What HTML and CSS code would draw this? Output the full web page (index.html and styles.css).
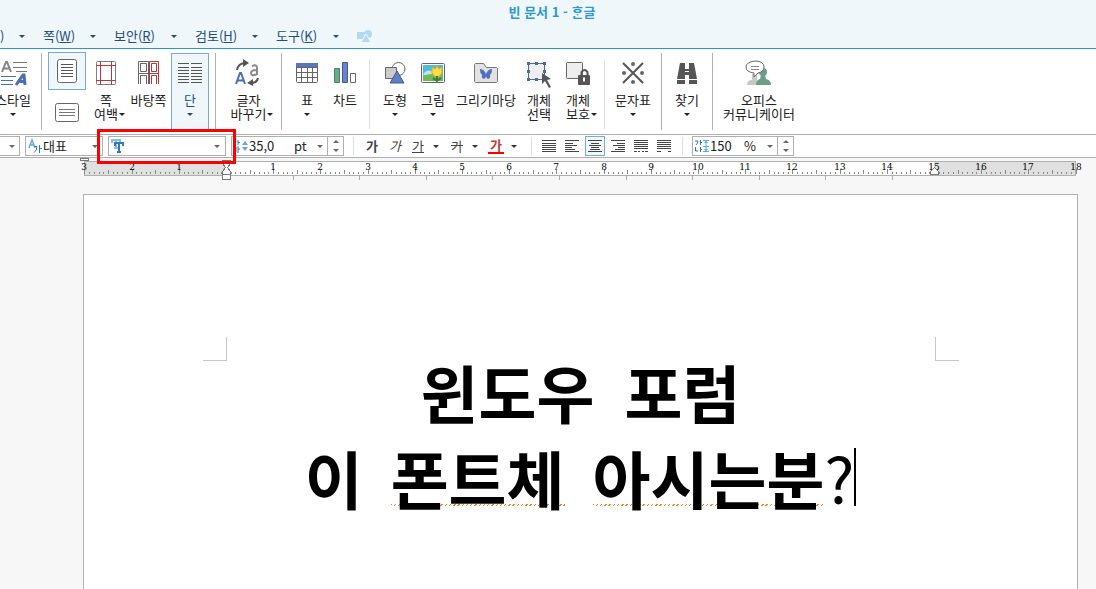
FILE: index.html
```html
<!DOCTYPE html>
<html lang="ko">
<head>
<meta charset="utf-8">
<title>빈 문서 1 - ᄒᆞᆫ글</title>
<link rel="stylesheet" href="styles.css">
</head>
<body>
<header class="top">
  <h1 class="title">빈 문서 1 - ᄒᆞᆫ글</h1>
  <nav class="menu">
    <button class="menu-item first"><span>)</span><i class="caret"></i></button>
    <button class="menu-item short"><span>쪽(<u>W</u>)</span><i class="caret"></i></button>
    <button class="menu-item"><span>보안(<u>R</u>)</span><i class="caret"></i></button>
    <button class="menu-item"><span>검토(<u>H</u>)</span><i class="caret"></i></button>
    <button class="menu-item"><span>도구(<u>K</u>)</span><i class="caret"></i></button>
    <button class="menu-icon" aria-label="도형 메뉴"><svg width="16" height="15" viewBox="0 0 16 15" fill="#b3d9ee"><path d="M0 3h7v7H0z"/><circle cx="11" cy="5" r="4"/><path d="M9 5l5 8.500H4z" stroke="#eff7fb"/></svg></button>
  </nav>
</header>

<section class="ribbon">
  <button class="tool w26"><svg width="28" height="28" viewBox="0 0 28 28"><g stroke="#777"><path d="M14 3.500h14M14 8.500h14M17 12.500h11"/></g><path d="M3 13l4-10h1l4 10M4 9.500h7" fill="none" stroke="#858585" stroke-width="2"/><path d="M2 17.500h15M2 21.500h12M2 25.500h12" stroke="#4a6db5"/><path d="M17 26l7-10h1l1 10M20 22.500h6" fill="none" stroke="#4a6db5" stroke-width="3"/></svg><span>스타일</span><i class="caret"></i></button>
  <hr class="sep after-style">
  <div class="views">
    <button class="view on" aria-label="쪽 보기"><svg width="24" height="26" viewBox="0 0 24 26"><rect x="2.500" y="1.500" width="19" height="23" rx="2" fill="#fff" stroke="#666"/><path d="M6 6.500h12M6 9.500h12M6 12.500h12M6 15.500h12M6 18.500h12" stroke="#555"/></svg></button>
    <button class="view" aria-label="폭 맞춤 보기"><svg width="24" height="20" viewBox="0 0 24 20"><rect x=".5" y=".5" width="23" height="18" rx="2" fill="#fff" stroke="#666"/><path d="M4 6.500h16M4 9.500h16M4 12.500h16" stroke="#777"/></svg></button>
  </div>
  <button class="tool w40"><svg width="28" height="28" viewBox="0 0 28 28" fill="none"><rect x="4.500" y="2.500" width="19" height="23" rx="1" stroke="#808080"/><path d="M8.500 2v24M19.500 2v24M4 6.500h20M4 21.500h20" stroke="#b8363c"/></svg><span>쪽</span><span>여백<i class="caret inline"></i></span></button>
  <button class="tool w45"><svg width="28" height="28" viewBox="0 0 28 28" fill="none"><path d="M3.500 25V2.500h10V25M3.500 14.500h10M5.500 4.500h6v8h-6zM5.500 25v-8.500h6V25" stroke="#666"/><path d="M14.500 25V2.500h9V25M14.500 14.500h9M16.500 4.500h5v8h-5zM16.500 25v-8.500h5V25" stroke="#b8363c"/></svg><span>바탕쪽</span></button>
  <button class="tool w38 on"><svg width="28" height="28" viewBox="0 0 28 28"><path d="M2 4.500h11M2 8.500h11M2 11.500h11M2 14.500h11M2 17.500h11M2 20.500h11M2 23.500h11M15 4.500h11M15 8.500h11M15 11.500h11M15 14.500h11M15 17.500h11M15 20.500h11M15 23.500h11" stroke="#555"/></svg><span>단</span><i class="caret"></i></button>
  <hr class="sep after-column">
  <button class="tool w65"><svg width="28" height="28" viewBox="0 0 28 28" fill="none"><path d="M1 25l4-11h1l4 11M2.500 21.500h6.500" stroke="#4a6db5" stroke-width="2"/><path d="M17 7q5-2 5 2v7M22 11q-6 0-6 3 0 4 6 1" stroke="#8a8a8a" stroke-width="2"/><path d="M2 11q1-6 7-7" stroke="#555" stroke-width="2"/><path d="M8 0l6 4-6 4z" fill="#555"/><path d="M23 19q-1 5-7 5" stroke="#555" stroke-width="2"/><path d="M18 20l-6 4 6 3z" fill="#555"/></svg><span>글자</span><span>바꾸기<i class="caret inline"></i></span></button>
  <hr class="sep">
  <button class="tool w50"><svg width="28" height="28" viewBox="0 0 28 28" fill="none"><rect x="3.500" y="4.500" width="21" height="19" rx="1" fill="#fff" stroke="#666"/><path d="M3 4h22v4H3z" fill="#5876bd"/><path d="M3 8.500h22M3 13.500h22M3 18.500h22M8.500 8v15M14.500 8v15M19.500 8v15" stroke="#666"/></svg><span>표</span><i class="caret"></i></button>
  <button class="tool w26"><svg width="28" height="28" viewBox="0 0 28 28"><path d="M3.500 9.500h5v14h-5z" fill="#6aad8b" stroke="#4b8469"/><path d="M11.500 3.500h5v20h-5z" fill="#6684c8" stroke="#405a98"/><path d="M19.500 14.500h5v9h-5z" fill="#fff" stroke="#666"/></svg><span>차트</span></button>
  <hr class="sep light after-chart">
  <button class="tool w50"><svg width="28" height="28" viewBox="0 0 28 28"><circle cx="17.500" cy="10" r="6.500" fill="#fff" stroke="#666"/><path d="M4.500 8.500h11v11h-11z" fill="#ccc" stroke="#666"/><path d="M16 12l7 12H9z" fill="#6280c4" stroke="#405a98"/></svg><span>도형</span><i class="caret"></i></button>
  <button class="tool w26"><svg width="28" height="28" viewBox="0 0 28 28"><rect x="2.500" y="4.500" width="23" height="19" rx="1" fill="#fff" stroke="#666"/><path d="M4 6h20v16H4z" fill="#4ebbdc"/><path d="M4 16q3-6 8-4 6-4 8 1v3z" fill="#bee7f3"/><path d="M4 17q9-4 20 0v5H4z" fill="#72b958"/><path d="M13 8l3 2 2-3 2 3 3-2v6q-2 4-5 4t-5-4z" fill="#ffdc3f" stroke="#d5aa20"/><path d="M18 17v5M14 19l4 3 4-3" fill="none" stroke="#347f3d" stroke-width="2"/></svg><span>그림</span><i class="caret"></i></button>
  <button class="tool w80"><svg width="28" height="28" viewBox="0 0 28 28"><path d="M2.500 22.500v-17l1-1h8l3 4h10l1 1v13l-1 1h-21z" fill="#e2e2e2" stroke="#777"/><path d="M8 10q4 0 6 5 2-5 6-5 0 5-2 5.500 1 5-3 4l-1-2-1 2q-4 1-3-4-2-.5-2-5.500z" fill="#4f70bd"/></svg><span>그리기마당</span></button>
  <button class="tool w26"><svg width="28" height="28" viewBox="0 0 28 28"><path d="M3.500 4.500h16v16h-16z" fill="#eee" stroke="#666"/><g fill="#466ab8"><path d="M2 3h3v3H2zM10 3h3v3h-3zM18 3h3v3h-3zM2 11h3v3H2zM18 11h3v3h-3zM2 19h3v3H2zM10 19h3v3h-3z"/></g><path d="M17 14l9 6-4 1 4 7-2 1-4-7-3 3z" fill="#555"/></svg><span>개체</span><span>선택</span></button>
  <button class="tool w52"><svg width="28" height="28" viewBox="0 0 28 28"><rect x="2.500" y="3.500" width="16" height="16" rx="1" fill="#eee" stroke="#666"/><path d="M17.500 17v-4q3-4 6 0v4" fill="none" stroke="#555" stroke-width="2"/><rect x="14" y="16" width="12" height="10" rx="1" fill="#555"/><path d="M20 18.500v4" stroke="#fff" stroke-width="2"/></svg><span>개체</span><span>보호<i class="caret inline"></i></span></button>
  <hr class="sep light">
  <button class="tool w56"><svg width="28" height="28" viewBox="0 0 28 28"><path d="M4 4l20 20M24 4L4 24" stroke="#555" stroke-width="2"/><g fill="#666"><circle cx="14" cy="5" r="2"/><circle cx="14" cy="23" r="2"/><circle cx="5" cy="14" r="2"/><circle cx="23" cy="14" r="2"/></g></svg><span>문자표</span><i class="caret"></i></button>
  <hr class="sep">
  <button class="tool w50"><svg width="28" height="28" viewBox="0 0 28 28" fill="#555"><path d="M7 4h5v6h4V4h5l3 16h-8v-4h-4v4H4z"/><path d="M4 21h8v4H4zM16 21h8v4h-8z"/><path d="M12 12.500h4" stroke="#fff"/></svg><span>찾기</span><i class="caret"></i></button>
  <hr class="sep">
  <button class="tool w92"><svg width="28" height="28" viewBox="0 0 28 28"><path d="M2 26q0-5 5-5v-6h5v11z" fill="#c8c8c8"/><circle cx="18" cy="13" r="4" fill="#6d9d86"/><path d="M11 26q0-5 4-6l1-4h4l1 4q5 1 5 6z" fill="#6d9d86"/><path d="M10 2q9 0 9 6 0 5-6 6l-4 4v-4q-8-1-8-6t9-6z" fill="#fff" stroke="#666"/><path d="M6 7.500h8M6 10.500h8" stroke="#888"/></svg><span>오피스</span><span>커뮤니케이터</span></button>
</section>

<section class="format">
  <div class="box cut"><button class="drop" aria-label="스타일 목록"><i class="caret gray"></i></button></div>
  <label class="box lang"><svg width="14" height="14" viewBox="0 0 14 14" fill="none"><path d="M1 9l3-8 3 8M2 6h4" stroke="#66a9dc" stroke-width="1.500"/><path d="M6 7.500h3q0 4-3 6M11.500 6v8M12 9.500h2" stroke="#2c7abb"/></svg><select aria-label="언어"><option>대표</option></select><i class="caret gray"></i></label>
  <div class="font-wrap">
    <label class="box font"><svg width="14" height="14" viewBox="0 0 14 14" fill="none"><path d="M1 4V1h8v3M5 1v8M3 9h4" stroke="#86bce6" stroke-width="2"/><path d="M4 7V4h8v3M8 4v9M6 13h4" stroke="#2c7abb" stroke-width="2"/></svg><select aria-label="글꼴"><option></option></select><i class="caret gray"></i></label>
    <div class="highlight"></div>
  </div>
  <div class="box size"><svg width="16" height="14" viewBox="0 0 16 14" fill="none"><path d="M0 2h3q0 2-2 4M5 1v5M5 3.500h2M0 8h3v5M5 7v7M5 10h2" stroke="#2c7abb"/><path d="M12 2l3 4H9zM12 12l3-4H9z" fill="#5fa8e0"/></svg><input aria-label="글자 크기" value="35,0"><span class="unit">pt</span><button class="drop" aria-label="크기 목록"><i class="caret gray"></i></button><span class="spin"><button aria-label="크게"><i class="caret gray up"></i></button><button aria-label="작게"><i class="caret gray"></i></button></span></div>
  <hr class="fsep after-size">
  <button class="ch"><b>가</b></button>
  <button class="ch"><em>가</em></button>
  <button class="ch"><u>가</u></button><button class="arrow" aria-label="밑줄 모양"><i class="caret"></i></button>
  <button class="ch"><s>가</s></button><button class="arrow" aria-label="취소선 모양"><i class="caret"></i></button>
  <button class="ch color"><span>가</span></button><button class="arrow" aria-label="글자 색"><i class="caret"></i></button>
  <hr class="fsep before-align">
  <button class="al" aria-label="양쪽 정렬"><svg width="16" height="14" viewBox="0 0 16 14"><path d="M1 1.500h14M1 4.500h14M1 6.500h14M1 8.500h14M1 10.500h14M1 12.500h14" stroke="#444"/></svg></button>
  <button class="al" aria-label="왼쪽 정렬"><svg width="16" height="14" viewBox="0 0 16 14"><path d="M1 1.500h14M1 4.500h8M1 6.500h12M1 8.500h7M1 10.500h10M1 12.500h14" stroke="#444"/></svg></button>
  <button class="al on" aria-label="가운데 정렬"><svg width="16" height="14" viewBox="0 0 16 14"><path d="M1 1.500h14M4 4.500h8M2 6.500h12M4 8.500h8M3 10.500h10M1 12.500h14" stroke="#444"/></svg></button>
  <button class="al" aria-label="오른쪽 정렬"><svg width="16" height="14" viewBox="0 0 16 14"><path d="M1 1.500h14M7 4.500h8M3 6.500h12M8 8.500h7M5 10.500h10M1 12.500h14" stroke="#444"/></svg></button>
  <button class="al" aria-label="배분 정렬"><svg width="16" height="14" viewBox="0 0 16 14"><path d="M1 1.500h14M1 3.500h14M1 5.500h14M1 7.500h14M1 9.500h14M1 12.500h3M5 12.500h2M9 12.500h2M12 12.500h3" stroke="#444"/></svg></button>
  <button class="al" aria-label="나눔 정렬"><svg width="16" height="14" viewBox="0 0 16 14"><path d="M1 1.500h14M1 3.500h14M1 5.500h14M1 7.500h14M1 9.500h14M1 12.500h4M12 12.500h3" stroke="#444"/></svg></button>
  <hr class="fsep before-line">
  <div class="box line"><svg width="14" height="14" viewBox="0 0 14 14" fill="none"><path d="M0 2h3q0 2-2 4M5.500 1v5M5 3.500h2M.5 8v4H3M5.500 8v5M5 10.500h2" stroke="#2c7abb"/><path d="M8 1.500h6M8 7.500h6M8 12.500h6M11 2v10" stroke="#5fa8e0"/><path d="M11 2l2 2H9zM11 12l2-2H9z" fill="#5fa8e0"/></svg><input aria-label="줄 간격" value="150"><span class="unit">%</span><button class="drop" aria-label="줄 간격 목록"><i class="caret gray"></i></button><span class="spin"><button aria-label="넓게"><i class="caret gray up"></i></button><button aria-label="좁게"><i class="caret gray"></i></button></span></div>
</section>

<main class="work">
  <svg class="ruler" id="ruler" width="1016" height="26" viewBox="80 158 1016 26" shape-rendering="crispEdges"></svg>
  <article class="page">
    <div class="margins"><i class="corner left"></i><i class="corner right"></i></div>
    <p class="row"><span>윈도우</span><span>포럼</span></p>
    <p class="row"><span>이</span><span class="typo">폰트체</span><span class="end"><span class="typo">아시는분</span><span class="mark">?</span><i class="cursor"></i></span></p>
  </article>
</main>
<script src="ruler.js"></script>
</body>
</html>
```
FILE: styles.css
```css
* { box-sizing: border-box; }
body {
  margin: 0;
  min-height: 100vh;
  display: flex;
  flex-direction: column;
  overflow: hidden;
  background: #f7f7f7;
  color: #222;
  font: 13px/14px "Noto Sans CJK KR", sans-serif;
}
button, input, select {
  margin: 0;
  padding: 0;
  border: 0;
  background: none;
  color: inherit;
  font: inherit;
  appearance: none;
}
svg { display: block; flex: none; overflow: visible; }
hr { margin: 0; border: 0; flex: none; }

.caret {
  display: block;
  flex: none;
  border: solid transparent;
  border-width: 3px 3px 0;
  border-top-color: currentColor;
}
.caret.gray { color: #666; }
.caret.up { transform: rotate(180deg); }
.caret.inline { display: inline-block; margin: 0 -7px 0 1px; vertical-align: 3px; }

.top { background: #eff7fb; border-bottom: 1px solid #2b93d1; }
.title {
  margin: 0;
  padding-left: 8px;
  color: #2b97d3;
  font-size: 13px;
  line-height: 24px;
  text-align: center;
}
.menu { display: flex; align-items: center; gap: 18px; height: 24px; color: #1f4e79; }
.menu-item { display: flex; flex: none; align-items: center; justify-content: space-between; width: 63px; }
.menu-item.first { width: 25px; }
.menu-item.short { width: 53px; }

.ribbon {
  display: flex;
  align-items: flex-start;
  height: 86px;
  padding-top: 4px;
  background: #fff;
  border-bottom: 1px solid #b0b0b0;
}
.tool {
  display: flex;
  flex: none;
  flex-direction: column;
  align-items: center;
  height: 77px;
  padding-top: 5px;
  border: 1px solid transparent;
  white-space: nowrap;
}
.tool svg { margin-bottom: 6px; }
.tool > .caret { margin-top: 6px; }
.on { background: #eff7fb; border: 1px solid #7aa9d6; }
.tool.on { color: #1f4e79; }
.w26 { width: 26px; }
.w38 { width: 38px; }
.w40 { width: 40px; }
.w45 { width: 45px; }
.w50 { width: 50px; }
.w52 { width: 52px; }
.w56 { width: 56px; }
.w65 { width: 65px; }
.w80 { width: 80px; }
.w92 { width: 92px; }
.sep { width: 1px; height: 77px; background: #b0b0b0; }
.sep.light { height: 69px; margin-top: 7px; background: #ddd; }
.after-style { margin: 0 6px 0 15px; }
.after-column { margin-left: 6px; }
.after-chart { margin-left: 11px; }
.views { display: flex; flex-direction: column; gap: 4px; margin-top: -1px; }
.view { display: flex; align-items: center; justify-content: center; width: 38px; height: 38px; }

.format {
  display: flex;
  align-items: center;
  height: 23px;
  background: #fff;
  border-bottom: 1px solid #b0b0b0;
}
.box {
  display: flex;
  flex: none;
  align-items: center;
  height: 20px;
  border: 1px solid #b0b0b0;
  background: #fff;
}
.box input { min-width: 0; }
.box select { flex: 1; min-width: 0; height: 18px; }
.drop { display: flex; align-items: center; justify-content: center; width: 15px; height: 18px; }
.cut { width: 20px; justify-content: flex-end; border-left: 0; margin-right: 5px; }
.lang { width: 78px; gap: 1px; padding: 0 4px 0 2px; }
.font-wrap { position: relative; margin-left: 5px; }
.font { width: 118px; padding: 0 5px 0 2px; }
.highlight { position: absolute; inset: -7px -10px -8px -11px; border: 3px solid #f00; pointer-events: none; }
.size { width: 113px; margin-left: 5px; padding-left: 1px; }
.size input { width: 45px; }
.size .unit { width: 18px; }
.spin { display: flex; flex-direction: column; align-items: center; justify-content: space-around; width: 16px; height: 18px; margin-left: auto; border-left: 1px solid #b0b0b0; }
.spin button { display: block; padding: 2px; }
.fsep { width: 1px; height: 18px; background: #ddd; }
.after-size { margin: 0 8px 0 9px; }
.before-align { margin: 0 7px 0 6px; }
.before-line { margin: 0 9px 0 5px; }
.ch { width: 20px; margin-right: 3px; color: #444; text-align: center; }
.ch + .arrow { margin-left: -3px; }
.ch em { display: inline-block; font-style: italic; }
.ch.color { color: #c0393c; }
.ch.color span { display: inline-block; padding: 0 2px; border-bottom: 2px solid #f00; font-weight: bold; }
.arrow { display: flex; justify-content: center; width: 16px; margin-right: 3px; color: #333; }
.al { display: flex; align-items: center; justify-content: center; width: 20px; height: 20px; margin-right: 3px; }
.line { width: 102px; padding-left: 2px; }
.line input { width: 34px; margin-left: 1px; }
.line .unit { width: 18px; }

.work { display: flex; flex: 1; flex-direction: column; }
.ruler { margin-left: 80px; }
.ruler text { font: 9px "DejaVu Serif", serif; text-anchor: middle; }
.page {
  flex: 1;
  margin: 10px 18px 0 83px;
  background: #fff;
  border: 1px solid #b0b0b0;
  border-bottom: 0;
  color: #000;
}
.margins { display: flex; justify-content: space-between; padding: 142px 118px 0 119px; }
.corner { width: 24px; height: 24px; border-bottom: 1px solid #c8c8c8; }
.corner.left { border-right: 1px solid #c8c8c8; }
.corner.right { border-left: 1px solid #c8c8c8; }
.row {
  display: flex;
  justify-content: center;
  gap: 30px;
  height: 60px;
  margin: 0 0 27px;
  font-size: 63px;
  font-weight: bold;
  line-height: 60px;
}
.row:last-child { gap: 28px; height: 58px; line-height: 58px; }
.typo { background: repeating-linear-gradient(135deg, #f08020 0 1px, transparent 1px 3px) bottom / 100% 2px no-repeat; }
.end { display: flex; }
.mark { font-weight: 400; }
.cursor { width: 2px; height: 58px; background: #000; }
```
FILE: ruler.js
```js
const NS = "http://www.w3.org/2000/svg";
const ruler = document.getElementById("ruler");
const ORIGIN = 226;
const UNIT = 47.2;

function add(name, attrs, text) {
  const node = document.createElementNS(NS, name);
  for (const key in attrs) node.setAttribute(key, attrs[key]);
  if (text !== undefined) node.textContent = text;
  ruler.appendChild(node);
}
function bar(x, y, width, height, fill) {
  add("rect", { x, y, width, height, fill });
}

bar(84, 161, 992, 15, "#b0b0b0");
bar(85, 162, 990, 13, "#fff");
bar(85, 162, 141, 13, "#e0e0e0");
bar(934, 162, 141, 13, "#e0e0e0");

// Minor, half and whole divisions, with a number at each whole one.
for (let i = -30; i <= 180; i++) {
  const x = Math.round(ORIGIN + i * UNIT / 10);
  const height = i % 10 === 0 ? 5 : i % 5 === 0 ? 4 : 2;
  bar(x, 174 - height, 1, height, "#888");
  if (i % 10 === 0 && i !== 0) {
    add("text", { x, y: 170 }, Math.abs(i / 10));
  }
}

// Default tab stops.
for (let n = 1; n <= 10; n++) {
  bar(Math.round(ORIGIN + n * 66.6), 175, 1, 5, "#aaa");
}

// Indent and margin handles.
const handle = { fill: "#fff", stroke: "#777" };
add("path", { ...handle, d: "M80.500 158.500h8v2h-8z" });
add("path", { ...handle, d: "M222.500 160.500h8v3l-3 4 3 4v8h-8v-8l3-4-3-4zM222.500 174.500h8" });
add("path", { ...handle, d: "M930.500 174.500v-3l4-4 4 4v3z" });
```
